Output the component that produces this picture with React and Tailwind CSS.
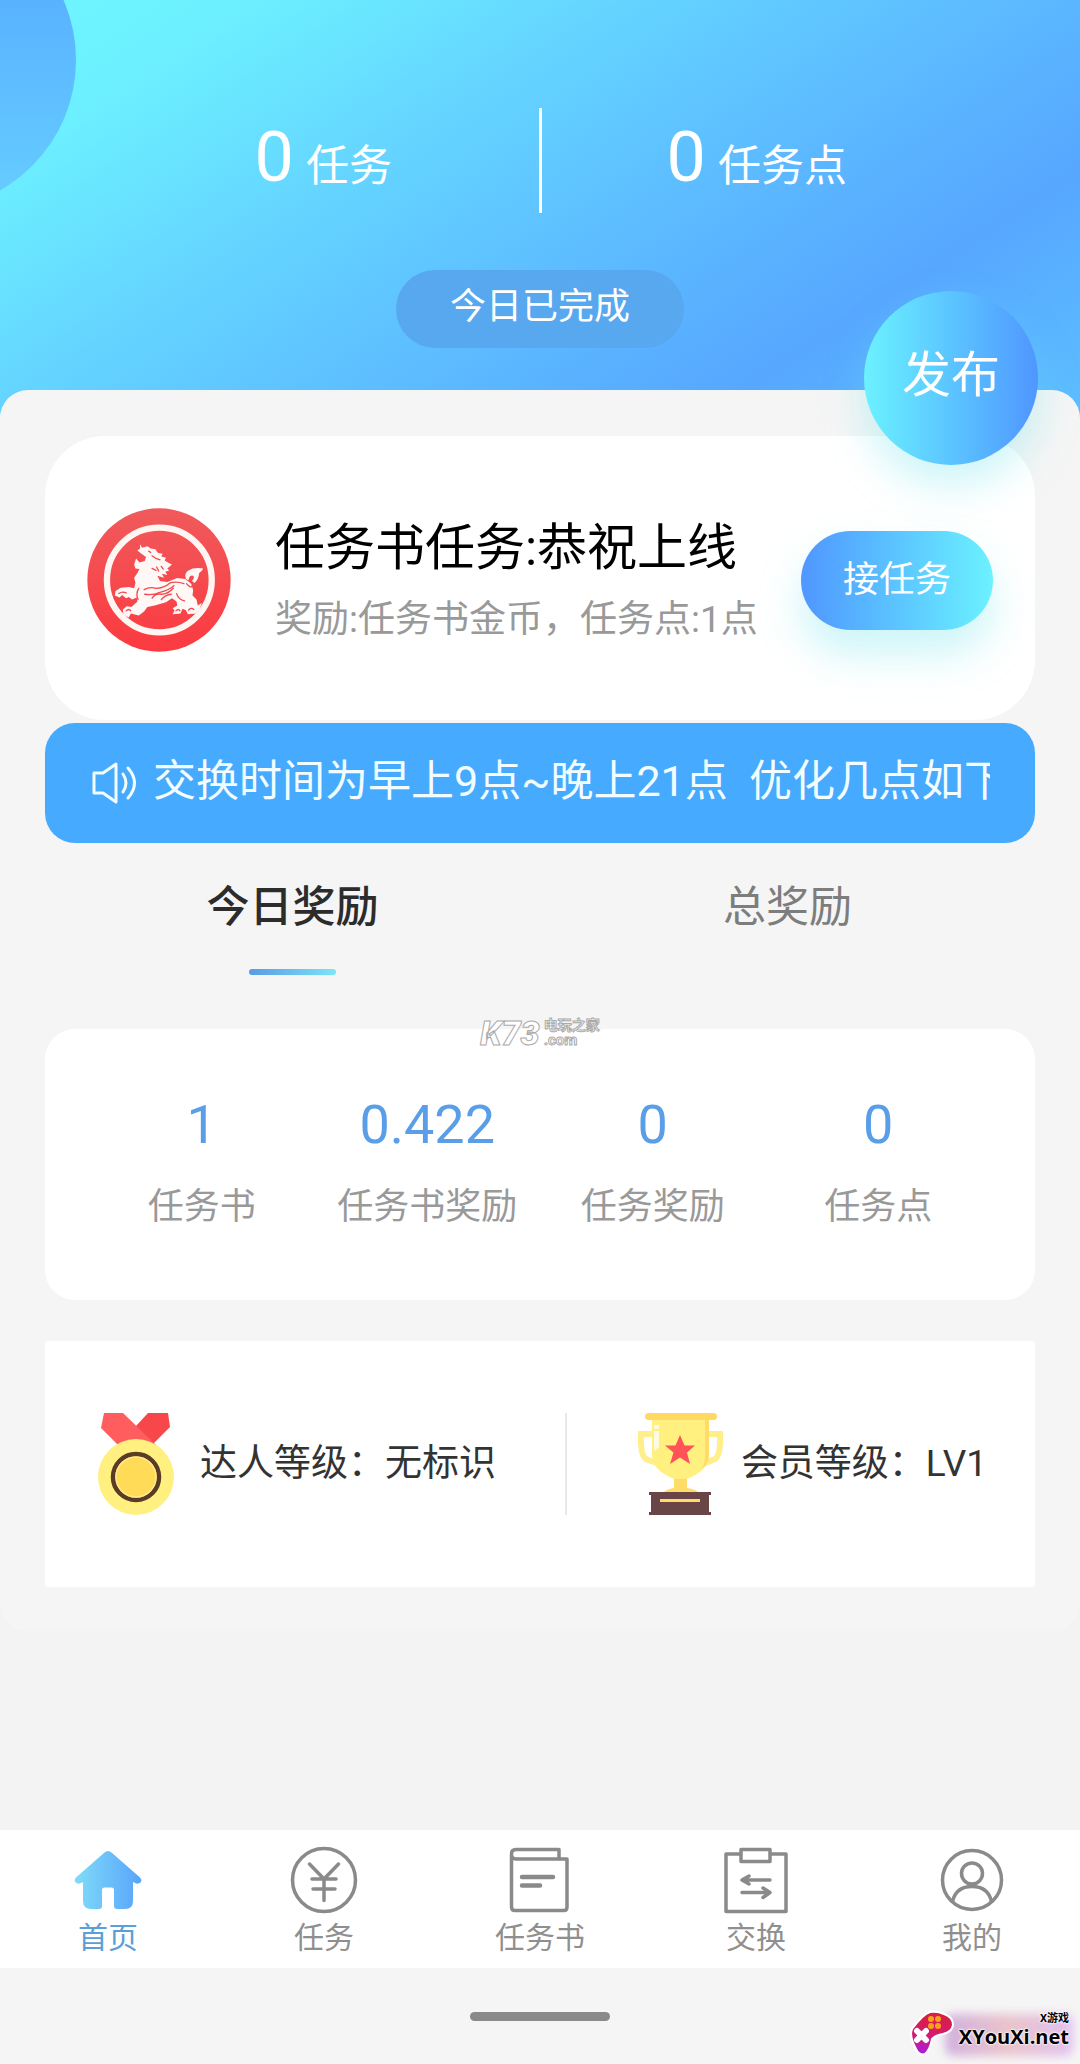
import React, { useState } from 'react';

const stats = [
  { value: '1', label: '任务书' },
  { value: '0.422', label: '任务书奖励' },
  { value: '0', label: '任务奖励' },
  { value: '0', label: '任务点' },
];

const HomeIcon = () => (
  <svg viewBox="0 0 68 68" className="w-[68px] h-[68px]">
    <defs>
      <linearGradient id="home" x1="0" x2="1" y1="0" y2="0">
        <stop offset="0" stopColor="#7fdcf8" />
        <stop offset="1" stopColor="#58a4fb" />
      </linearGradient>
    </defs>
    <path
      fill="url(#home)"
      d="M30.500 6.500Q34 3.500 37.500 6.500L66 31.500Q68.500 34 66.500 36.500Q64 38.500 61 37L59 36V55Q59 63 51 63H43Q40 63 40 60V44Q40 41.500 37.500 41.500H30.500Q28 41.500 28 44V60Q28 63 25 63H17Q9 63 9 55V36L7 37Q4 38.500 1.500 36.500Q-.5 34 2 31.500Z"
    />
  </svg>
);

const LineIcon = ({ children }) => (
  <svg
    viewBox="0 0 68 68"
    className="w-[68px] h-[68px]"
    fill="none"
    stroke="#8a8a8a"
    strokeWidth="3.500"
    strokeLinecap="round"
    strokeLinejoin="round"
  >
    {children}
  </svg>
);

const YenIcon = () => (
  <LineIcon>
    <circle cx="34" cy="34" r="31.500" />
    <path d="M19.500 18L34 33L48.500 18M22 33H46M23 43H45M34 33V54.500" />
  </LineIcon>
);

const BookIcon = () => (
  <LineIcon>
    <path d="M53 13V3.500H10Q5.500 3.500 5.500 8V61Q5.500 64.500 9 64.500H58Q61 64.500 61 61V13H10Q5.500 13 5.500 8.500" />
    <path d="M16 31H47M16 39.500H34" strokeWidth="4.500" />
  </LineIcon>
);

const ExchangeIcon = () => (
  <LineIcon>
    <path d="M18 8H4V65.500H64V8H49" />
    <rect x="19" y="3.500" width="29" height="12" />
    <path d="M48 34H20L27 30M20 34L27 38M20 46.500H48L41 42M48 46.500L41 51.500" />
  </LineIcon>
);

const UserIcon = () => (
  <LineIcon>
    <circle cx="34" cy="34" r="29.500" />
    <circle cx="34" cy="27.500" r="10.500" />
    <path d="M14.500 55.500Q18 40.500 34 40.500T53.500 55.500" />
  </LineIcon>
);

const tabs = [
  { label: '首页', Icon: HomeIcon, active: true },
  { label: '任务', Icon: YenIcon },
  { label: '任务书', Icon: BookIcon },
  { label: '交换', Icon: ExchangeIcon },
  { label: '我的', Icon: UserIcon },
];

const PixiuLogo = () => (
  <svg viewBox="80 80 434 434" className="w-36 h-36 shrink-0">
    <defs>
      <linearGradient id="seal" x1="0" x2="0" y1="0" y2="1">
        <stop offset="0" stopColor="#f05a5c" />
        <stop offset="1" stopColor="#fb3a40" />
      </linearGradient>
    </defs>
    <circle cx="297" cy="297" r="216" fill="url(#seal)" />
    <circle cx="298" cy="297" r="158" fill="none" stroke="#fff5f2" strokeWidth="19" />
    <g fill="#fff8f6">
      {/* head, mane, body and front legs */}
      <path d="M240 189L246 200L262 195L272 202L286 204L294 216L308 218L304 226L318 230L314 238L324 244L336 250L322 262L328 268L316 272L322 282L306 278L312 290L292 284L300 300L322 303L352 291L376 294L394 308L400 328L398 344L410 356L414 374L426 366L420 384L408 398L384 400L378 388L368 384L362 398L338 400L344 388L338 382L352 374L350 362L336 352L318 364L284 374L262 378L252 392L236 404L212 398L206 410L190 402L188 386L200 376L214 378L232 362L230 350L216 356L206 348L198 352L186 342L178 350L164 344L166 330L182 320L206 318L222 322L226 306L222 290L232 276L238 264L226 262L222 250L228 232L238 244L254 240L258 228L244 218L232 208L240 202Z" />
      {/* tail */}
      <path d="M378 294Q372 276 386 268Q402 258 430 262Q426 272 418 276Q416 296 404 306L396 300Q406 290 400 284Q390 282 388 290L386 298Z" />
    </g>
    <g fill="none" stroke="#f24b4e" strokeWidth="4" strokeLinecap="round">
      <path d="M252 326Q270 316 288 322Q312 322 330 306Q350 300 372 308" />
      <path d="M254 340Q278 344 300 334Q326 328 342 314M276 352Q286 336 304 340Q324 340 340 322M304 356Q316 342 334 340" />
      <path d="M236 322Q226 338 234 356M350 338Q356 356 374 360M380 308Q392 322 396 316" />
      <path d="M198 390Q206 382 212 390M348 390Q356 382 360 390M386 388Q394 378 402 386M176 338Q186 330 198 336" />
      <path d="M276 262L288 268M290 258L296 270M304 256L310 264M276 224L288 232L300 236M266 210L272 214" />
    </g>
  </svg>
);

const Medal = () => (
  <svg viewBox="0 0 78 102" className="w-[78px] h-[102px] shrink-0">
    <path d="M50 0H70L72 14L54 32L38 24Q36 18 38 13Z" fill="#f8474a" />
    <path d="M6 0H25L58 32H20L3 15Z" fill="#ff5d5e" />
    <circle cx="38" cy="64" r="38" fill="#fff07f" />
    <circle cx="38" cy="64" r="23" fill="#ffdb58" stroke="#593b26" strokeWidth="4.500" />
    <circle cx="38" cy="64" r="20" fill="none" stroke="#ffe98a" strokeWidth="1.500" />
  </svg>
);

const Trophy = () => (
  <svg viewBox="0 0 88 102" className="w-[88px] h-[102px] shrink-0">
    <path d="M16 21H4Q3 42 9 46L22 51M71 21H83Q84 42 78 46L66 51" fill="none" stroke="#ffee8a" strokeWidth="6" />
    <path d="M15 7H72V42Q72 57 50 66V76H37V66Q15 57 15 42Z" fill="#fff07f" />
    <path d="M68 7H72V42Q72 50 65 56Q68 50 68 42Z" fill="#ffdc68" />
    <path d="M37 66H50V75Q59 76 62 80H26Q29 76 37 75Z" fill="#ffdc68" />
    <rect x="8" y="0" width="72" height="7" rx="3.500" fill="#ffd964" />
    <path d="M17 18H22V34L17 38ZM17 12H22V16H17Z" fill="#fffbe0" />
    <path d="M43 22L47.500 32.500H58L50 39.500L53 51L43 44.500L33 51L36.500 39.500L28 32.500H38.500Z" fill="#ff5357" />
    <path d="M12 79H74V82H72V99H74V102H12V99H14V82H12Z" fill="#6a4547" />
    <path d="M23 87.500H63" stroke="#ffdc68" strokeWidth="3" />
  </svg>
);

const Speaker = () => (
  <svg viewBox="0 0 46 42" className="w-[46px] h-[42px] shrink-0" fill="none" stroke="#f2fdff" strokeWidth="3" strokeLinejoin="round">
    <path d="M3 11H12L25 2V40L12 31H3Z" />
    <path d="M32 12Q38 21 32 30M37 6Q50 21 37 36" strokeLinecap="round" />
  </svg>
);

const Gamepad = () => (
  <svg viewBox="0 0 46 46" className="w-[46px] h-[46px]">
    <defs>
      <linearGradient id="pad" x1="0" x2="0" y1="0" y2="1">
        <stop offset="0" stopColor="#d8203c" />
        <stop offset=".5" stopColor="#d51b6a" />
        <stop offset="1" stopColor="#a820e0" />
      </linearGradient>
    </defs>
    <path
      d="M3 19Q14 4 21 2Q29 1 35 4Q44 7 44 15Q43 22 34 24Q27 25 23 29Q21 40 16 44Q10 46 7 39Q0 26 3 19Z"
      fill="url(#pad)"
      stroke="#fff"
      strokeWidth="2"
    />
    <path d="M8 21L17 30M17 21L8 30" stroke="#fff" strokeWidth="6" strokeLinecap="round" />
    <g fill="#f9a11b">
      <circle cx="22" cy="9" r="3" />
      <circle cx="29" cy="9" r="3" />
      <circle cx="22" cy="16" r="3" />
      <circle cx="29" cy="16" r="3" />
    </g>
  </svg>
);

const HeaderCount = ({ value, label }) => (
  <div className="flex-1 flex items-baseline justify-center gap-3 pb-2">
    <span className="text-[70px] leading-none">{value}</span>
    <span className="text-[43px] leading-none">{label}</span>
  </div>
);

const App = () => {
  const [period, setPeriod] = useState('today');

  return (
    <div className="min-h-screen flex flex-col bg-[#f3f3f3] font-[Roboto,'Noto_Sans_CJK_SC',sans-serif] text-[#333]">
      {/* Header */}
      <header className="relative overflow-hidden bg-[linear-gradient(147deg,#6ef7ff_0%,#6cefff_15%,#64d4ff_36%,#5bb6ff_62%,#57a7ff_77%,#5dc0ff_100%)] pt-[108px] pb-[82px] text-white">
        <div className="absolute -left-56 -top-[90px] w-[300px] h-[300px] rounded-full bg-gradient-to-b from-[#55a6ff] to-[#66ceff]"></div>
        <div className="relative flex items-center px-[108px]">
          <HeaderCount value="0" label="任务" />
          <div className="w-[3px] h-[105px] bg-white"></div>
          <HeaderCount value="0" label="任务点" />
        </div>
        <div className="relative mt-[57px] flex justify-center">
          <span className="w-72 h-[78px] pb-1 rounded-full bg-[#57a8ef] flex items-center justify-center text-[36px]">
            今日已完成
          </span>
        </div>
      </header>

      <main className="relative -mt-10 rounded-[28px] bg-[#f5f5f5] px-[45px] pt-[46px] pb-11">
        <button className="absolute right-[42px] -top-[99px] w-[174px] h-[174px] pb-1 rounded-full bg-gradient-to-r from-[#6cf2ff] to-[#5096ff] text-white text-[49px] shadow-[0_20px_40px_rgba(108,225,235,0.35)]">
          发布
        </button>

        {/* Current task */}
        <section className="bg-white rounded-[60px] h-[284px] pt-1 px-[42px] flex items-center">
          <PixiuLogo />
          <div className="ml-11 pt-2 flex-1 whitespace-nowrap">
            <h2 className="text-[50px] leading-[64px] text-black">任务书任务:恭祝上线</h2>
            <p className="mt-2 text-[37px] leading-[64px] text-[#999]">奖励:任务书金币，任务点:1点</p>
          </div>
          <button className="w-48 h-[99px] shrink-0 rounded-full bg-gradient-to-r from-[#5096ff] to-[#6cf2ff] text-white text-[36px] shadow-[0_24px_40px_rgba(108,225,235,0.35)]">
            接任务
          </button>
        </section>

        {/* Notice */}
        <section className="relative mt-[3px] h-[120px] rounded-[30px] bg-[#46aaff] pl-[46px] pr-[45px] flex items-center text-[#f2fdff]">
          <Speaker />
          <p className="ml-4 flex-1 overflow-hidden whitespace-pre text-[43px] leading-[64px] pb-1">
            交换时间为早上9点~晚上21点  优化几点如下
          </p>
        </section>

        {/* Reward tabs */}
        <div className="mt-8 flex" role="tablist">
          {[['today', '今日奖励'], ['total', '总奖励']].map(([key, label]) => (
            <button
              key={key}
              role="tab"
              aria-selected={period === key}
              onClick={() => setPeriod(key)}
              className="flex-1 flex flex-col items-center"
            >
              <span className={period === key ? 'text-[43px] leading-[64px] font-medium text-[#2c2c2c]' : 'text-[43px] leading-[64px] text-[#7d7d7d]'}>
                {label}
              </span>
              {period === key && (
                <span className="mt-[30px] w-[87px] h-[6px] rounded-sm bg-gradient-to-r from-[#5a9ae4] to-[#7ae6f8]"></span>
              )}
            </button>
          ))}
        </div>

        <section className="relative mt-[54px] h-[271px] rounded-[30px] bg-white px-11 pt-[64px]">
          <div className="absolute left-0 right-0 -top-3 flex items-center justify-center gap-1 text-white font-bold [-webkit-text-stroke:1px_#aaa]">
            <span className="text-[34px] leading-8 italic font-black">K73</span>
            <span className="flex flex-col">
              <span className="text-[14px] leading-[15px]">电玩之家</span>
              <span className="text-[15px] leading-[15px]">.com</span>
            </span>
          </div>
          <dl className="grid grid-cols-4 text-center">
            {stats.map((s) => (
              <div key={s.label} className="flex flex-col-reverse">
                <dt className="mt-[18px] text-[36px] leading-[64px] text-[#999]">{s.label}</dt>
                <dd className="text-[54px] leading-[64px] text-[#5a9ee8]">{s.value}</dd>
              </div>
            ))}
          </dl>
        </section>

        {/* Levels */}
        <section className="mt-[41px] h-[246px] rounded-sm bg-white pl-[53px] pr-12 flex items-center justify-between whitespace-nowrap text-[37px]">
          <div className="flex items-center gap-6">
            <Medal />
            <span>达人等级：无标识</span>
          </div>
          <div className="w-[2px] h-[102px] bg-[#e8e8e8]"></div>
          <div className="flex items-center gap-4">
            <Trophy />
            <span>会员等级：LV1</span>
          </div>
        </section>
      </main>

      {/* Bottom navigation */}
      <nav className="mt-auto bg-white flex h-[138px] pt-4">
        {tabs.map(({ label, Icon, active }) => (
          <a key={label} href="#" className="flex-1 flex flex-col items-center">
            <Icon />
            <span className={active ? 'text-[30px] leading-[48px] text-[#5a9fd8]' : 'text-[30px] leading-[48px] text-[#8f8f8f]'}>
              {label}
            </span>
          </a>
        ))}
      </nav>
      <footer className="relative h-24 bg-[#f5f5f5] flex items-start justify-center pt-[44px]">
        <div className="w-[140px] h-[9px] rounded-full bg-[#8a8a8a]"></div>
        <div className="absolute right-[11px] bottom-2 flex items-center gap-1 text-black">
          <div className="absolute left-9 -right-1 top-1 bottom-0 rounded-lg bg-gradient-to-r from-[#c9a0d8] via-[#e8b8c0] to-[#dcb4f0] opacity-80 blur-[5px]"></div>
          <div className="relative">
            <Gamepad />
          </div>
          <div className="relative flex flex-col items-end pb-1 font-bold [text-shadow:0_0_2px_#fff,0_0_2px_#fff,0_0_3px_#fff]">
            <span className="text-[11px] leading-3">X游戏</span>
            <span className="text-[20px] leading-6 font-['Open_Sans',sans-serif]">XYouXi.net</span>
          </div>
        </div>
      </footer>
    </div>
  );
};

export default App;
